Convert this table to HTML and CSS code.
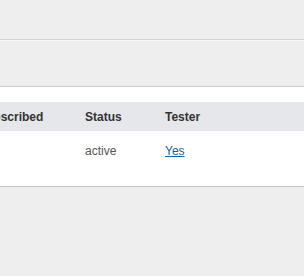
FILE: index.html
```html
<!DOCTYPE html>
<html>
<head>
	<title>Subscribers</title>
	<link rel="stylesheet" href="styles.css">
</head>
<body>
	<div class="topbar"></div>
	<div class="subbar"></div>
	<div class="panel">
		<table class="list">
			<colgroup>
				<col class="col-sub">
				<col class="col-status">
				<col class="col-tester">
			</colgroup>
			<thead>
				<tr>
					<th>Subscribed</th>
					<th>Status</th>
					<th>Tester</th>
				</tr>
			</thead>
			<tbody>
				<tr>
					<td></td>
					<td>active</td>
					<td><a href="#" class="link">Yes</a></td>
				</tr>
			</tbody>
		</table>
	</div>
</body>
</html>
```

FILE: styles.css
```css
html {
	overflow: hidden;
}
body {
	margin: 0;
	background-color: #eeeeee;
	font-family: 'Liberation Sans', Arial, sans-serif;
	font-size: 12px;
}
.topbar {
	height: 39px;
	border-bottom: 1px solid #d2d2d2;
}
.subbar {
	height: 45px;
	border-top: 1px solid #f9f9f9;
}
.panel {
	margin: 0 -40px 0 -40px;
	padding: 15px 0 28px 0;
	background-color: #fff;
	border-top: 1px solid #cdcdcd;
	border-bottom: 1px solid #c6c6c6;
	box-shadow: 0 1px 1px rgba(0, 0, 0, 0.06);
}
.list {
	width: 100%;
	border-collapse: collapse;
	table-layout: fixed;
}
.col-sub {
	width: 125px;
}
.col-status {
	width: 80px;
}
.list th {
	text-align: left;
	font-weight: bold;
	color: #333;
	background-color: #e6e7ea;
	height: 29px;
	padding: 0;
	line-height: 14px;
}
.list td {
	color: #555;
	padding: 13px 0 0 0;
	line-height: 14px;
	vertical-align: top;
}
.list th:first-child,
.list td:first-child {
	padding-left: 18px;
}
.link {
	color: #1461a8;
	text-decoration: underline;
}
```
